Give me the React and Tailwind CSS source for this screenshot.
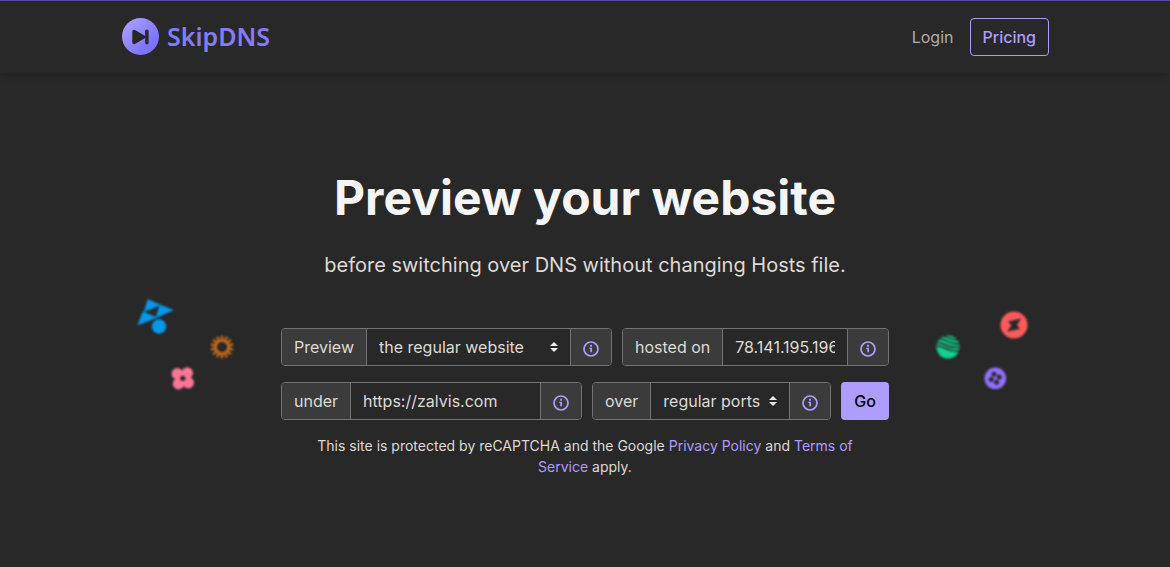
import React from 'react';

const addonClass = 'flex items-center bg-[#3b3b3b] px-3 whitespace-nowrap';
const fieldClass = 'h-full min-w-0 appearance-none bg-transparent px-3 text-[#dedad6] outline-none';

const Logo = () => (
  <a href="#" className="flex items-center gap-2 pb-0.5 text-[#847bff]">
    <svg className="h-[37px] w-[37px]" viewBox="0 0 36 36" aria-hidden="true">
      <defs>
        <linearGradient id="logo-fill" x1="0" y1="0" x2="1" y2="1">
          <stop offset="0" stopColor="#b0a6ff" />
          <stop offset="0.75" stopColor="#7b72ff" />
        </linearGradient>
      </defs>
      <circle cx="18" cy="18" r="18" fill="url(#logo-fill)" />
      <path
        d="M11.7 13.2v10.6l9.3-5.300zM24.200 13v11"
        fill="#282828"
        stroke="#282828"
        strokeWidth="3.4"
        strokeLinejoin="round"
        strokeLinecap="round"
      />
    </svg>
    <span className="font-['Noto_Sans',sans-serif] text-[25px] leading-8 font-semibold">SkipDNS</span>
  </a>
);

const InfoButton = ({ label }) => (
  <button type="button" aria-label={label} className="flex w-[41px] items-center justify-center border-l border-[#737373] bg-[#3b3b3b] pt-1">
    <svg className="h-4 w-4" viewBox="0 0 16 16" fill="#ae9cff" aria-hidden="true">
      <circle cx="8" cy="8" r="7" fill="none" stroke="#ae9cff" strokeWidth="1.7" />
      <rect x="7.1" y="3.8" width="1.9" height="1.9" />
      <path d="M6.3 6.8H9v4.4H7.3V8.1h-1z" />
    </svg>
  </button>
);

const InputGroup = ({ id, label, info, className, children }) => (
  <div className={`flex h-[38px] overflow-hidden rounded border border-[#737373] ${className}`}>
    <label htmlFor={id} className={addonClass}>{label}</label>
    <div className="relative min-w-0 flex-1 border-l border-[#737373]">{children}</div>
    <InfoButton label={info} />
  </div>
);

const Select = ({ id, options }) => (
  <>
    <select id={id} className={`${fieldClass} w-full`}>
      {options.map(option => (
        <option key={option} className="bg-[#282828]">{option}</option>
      ))}
    </select>
    <svg className="pointer-events-none absolute top-3 right-3 h-3 w-2" viewBox="0 0 8 12" fill="#f2f2f2" aria-hidden="true">
      <path d="M4 1l4 4H0zM0 7h8l-4 4z" />
    </svg>
  </>
);

const LeftShapes = () => (
  <svg className="h-[110px] w-[130px] shrink-0 blur-[0.8px]" viewBox="0 0 130 110" aria-hidden="true">
    <g fill="#0599ed">
      <path
        d="M28 9.500L40 15l-15.500 6.500zM40 15l13 5.200L36 27.500zM23 22l13.500 5.500L18 34.800z"
        stroke="#0599ed"
        strokeWidth="0.8"
      />
      <circle cx="39" cy="36.5" r="7.2" />
    </g>
    <g stroke="#d6701c" strokeWidth="2.2" strokeLinecap="round" fill="none">
      <circle cx="102" cy="57" r="6.5" />
      {Array.from({ length: 14 }, (_, i) => (
        <path key={i} d="M102 50.5V46.5" transform={`rotate(${(i * 360) / 14} 102 57)`} />
      ))}
    </g>
    <g fill="#fc7694">
      <circle cx="57.3" cy="83.8" r="5.7" />
      <circle cx="67.3" cy="83" r="5.7" />
      <circle cx="58.5" cy="93.8" r="5.7" />
      <circle cx="68.3" cy="92.8" r="5.7" />
      <circle cx="62.8" cy="88.3" r="5.5" />
    </g>
    <circle cx="62.8" cy="88.3" r="2.6" fill="#282828" />
  </svg>
);

const RightShapes = () => (
  <svg className="h-[110px] w-[130px] shrink-0 blur-[0.8px]" viewBox="0 0 130 110" aria-hidden="true">
    <defs>
      <clipPath id="globe">
        <circle cx="28" cy="57" r="11.5" />
      </clipPath>
    </defs>
    <g clipPath="url(#globe)">
      <rect x="16" y="45" width="24" height="24" fill="#12d18c" />
      <g fill="none" stroke="#282828" strokeWidth="1.6">
        <path d="M15 56.500c8-3 13 7 25 4" />
        <path d="M15 53c8-3 13 7 25 4" />
        <path d="M17 49.500c8-3 12 6.500 23 4" />
        <path d="M21 46.500c7-2 9 5 19 3.500" />
      </g>
    </g>
    <circle cx="94" cy="35" r="13.5" fill="#fb5a5a" />
    <path d="M88 31.500l13-3-4 6.500 3 4-13 2.500 4.500-6z" fill="#282828" />
    <circle cx="75.3" cy="88.3" r="10.8" fill="#9370fd" />
    <g fill="#282828">
      <circle cx="74" cy="84.3" r="2.5" />
      <circle cx="79.300" cy="87" r="2.5" />
      <circle cx="71.300" cy="89.600" r="2.5" />
      <circle cx="76.600" cy="92.300" r="2.5" />
    </g>
  </svg>
);

const App = () => {
  return (
    <div className="min-h-screen bg-[#282828] font-['Inter',sans-serif] text-base text-[#dedad6]">
      <header className="border-t border-[#5b4aa5] shadow-[0_2px_8px_rgba(0,0,0,0.15)]">
        <div className="mx-auto flex h-[72px] max-w-[930px] items-center justify-between pr-px pl-0.5">
          <Logo />
          <nav className="flex items-center gap-4">
            <a href="#login" className="text-[#b0aca8]">Login</a>
            <a href="#pricing" className="rounded border border-[#ae9cff] px-3 py-1.5 font-medium text-[#ae9cff]">Pricing</a>
          </nav>
        </div>
      </header>

      <main className="mx-auto max-w-[930px] pt-24 text-center">
        <h1 className="text-5xl leading-[58px] font-bold text-[#f5f5f5]">Preview your website</h1>
        <p className="mt-[23px] text-xl leading-[30px]">before switching over DNS without changing Hosts file.</p>

        <div className="mt-2.5 flex items-start justify-between">
          <LeftShapes />
          <form className="mt-[38px] w-[608px] shrink-0 text-left" onSubmit={e => e.preventDefault()}>
            <div className="flex gap-2.5">
              <InputGroup id="mode" label="Preview" info="About the preview mode" className="w-[331px]">
                <Select id="mode" options={['the regular website', 'the mobile website']} />
              </InputGroup>
              <InputGroup id="host" label="hosted on" info="About the server IP" className="flex-1">
                <div className="h-full px-3">
                  <input id="host" type="text" defaultValue="78.141.195.196" className="h-full w-full bg-transparent outline-none" />
                </div>
              </InputGroup>
            </div>
            <div className="mt-4 flex gap-2.5">
              <InputGroup id="domain" label="under" info="About the domain" className="w-[301px]">
                <input id="domain" type="text" defaultValue="https://zalvis.com" className={`${fieldClass} w-full`} />
              </InputGroup>
              <InputGroup id="ports" label="over" info="About the ports" className="flex-1">
                <Select id="ports" options={['regular ports', 'custom ports']} />
              </InputGroup>
              <button type="submit" className="w-12 rounded bg-[#ae9cff] font-medium text-black">Go</button>
            </div>
            <p className="mx-auto mt-[15px] max-w-[560px] text-center text-sm leading-[21px]">
              This site is protected by reCAPTCHA and the Google{' '}
              <a href="#privacy" className="text-[#ae9cff]">Privacy Policy</a> and{' '}
              <a href="#terms" className="text-[#ae9cff]">Terms of Service</a> apply.
            </p>
          </form>
          <RightShapes />
        </div>
      </main>
    </div>
  );
};

export default App;
